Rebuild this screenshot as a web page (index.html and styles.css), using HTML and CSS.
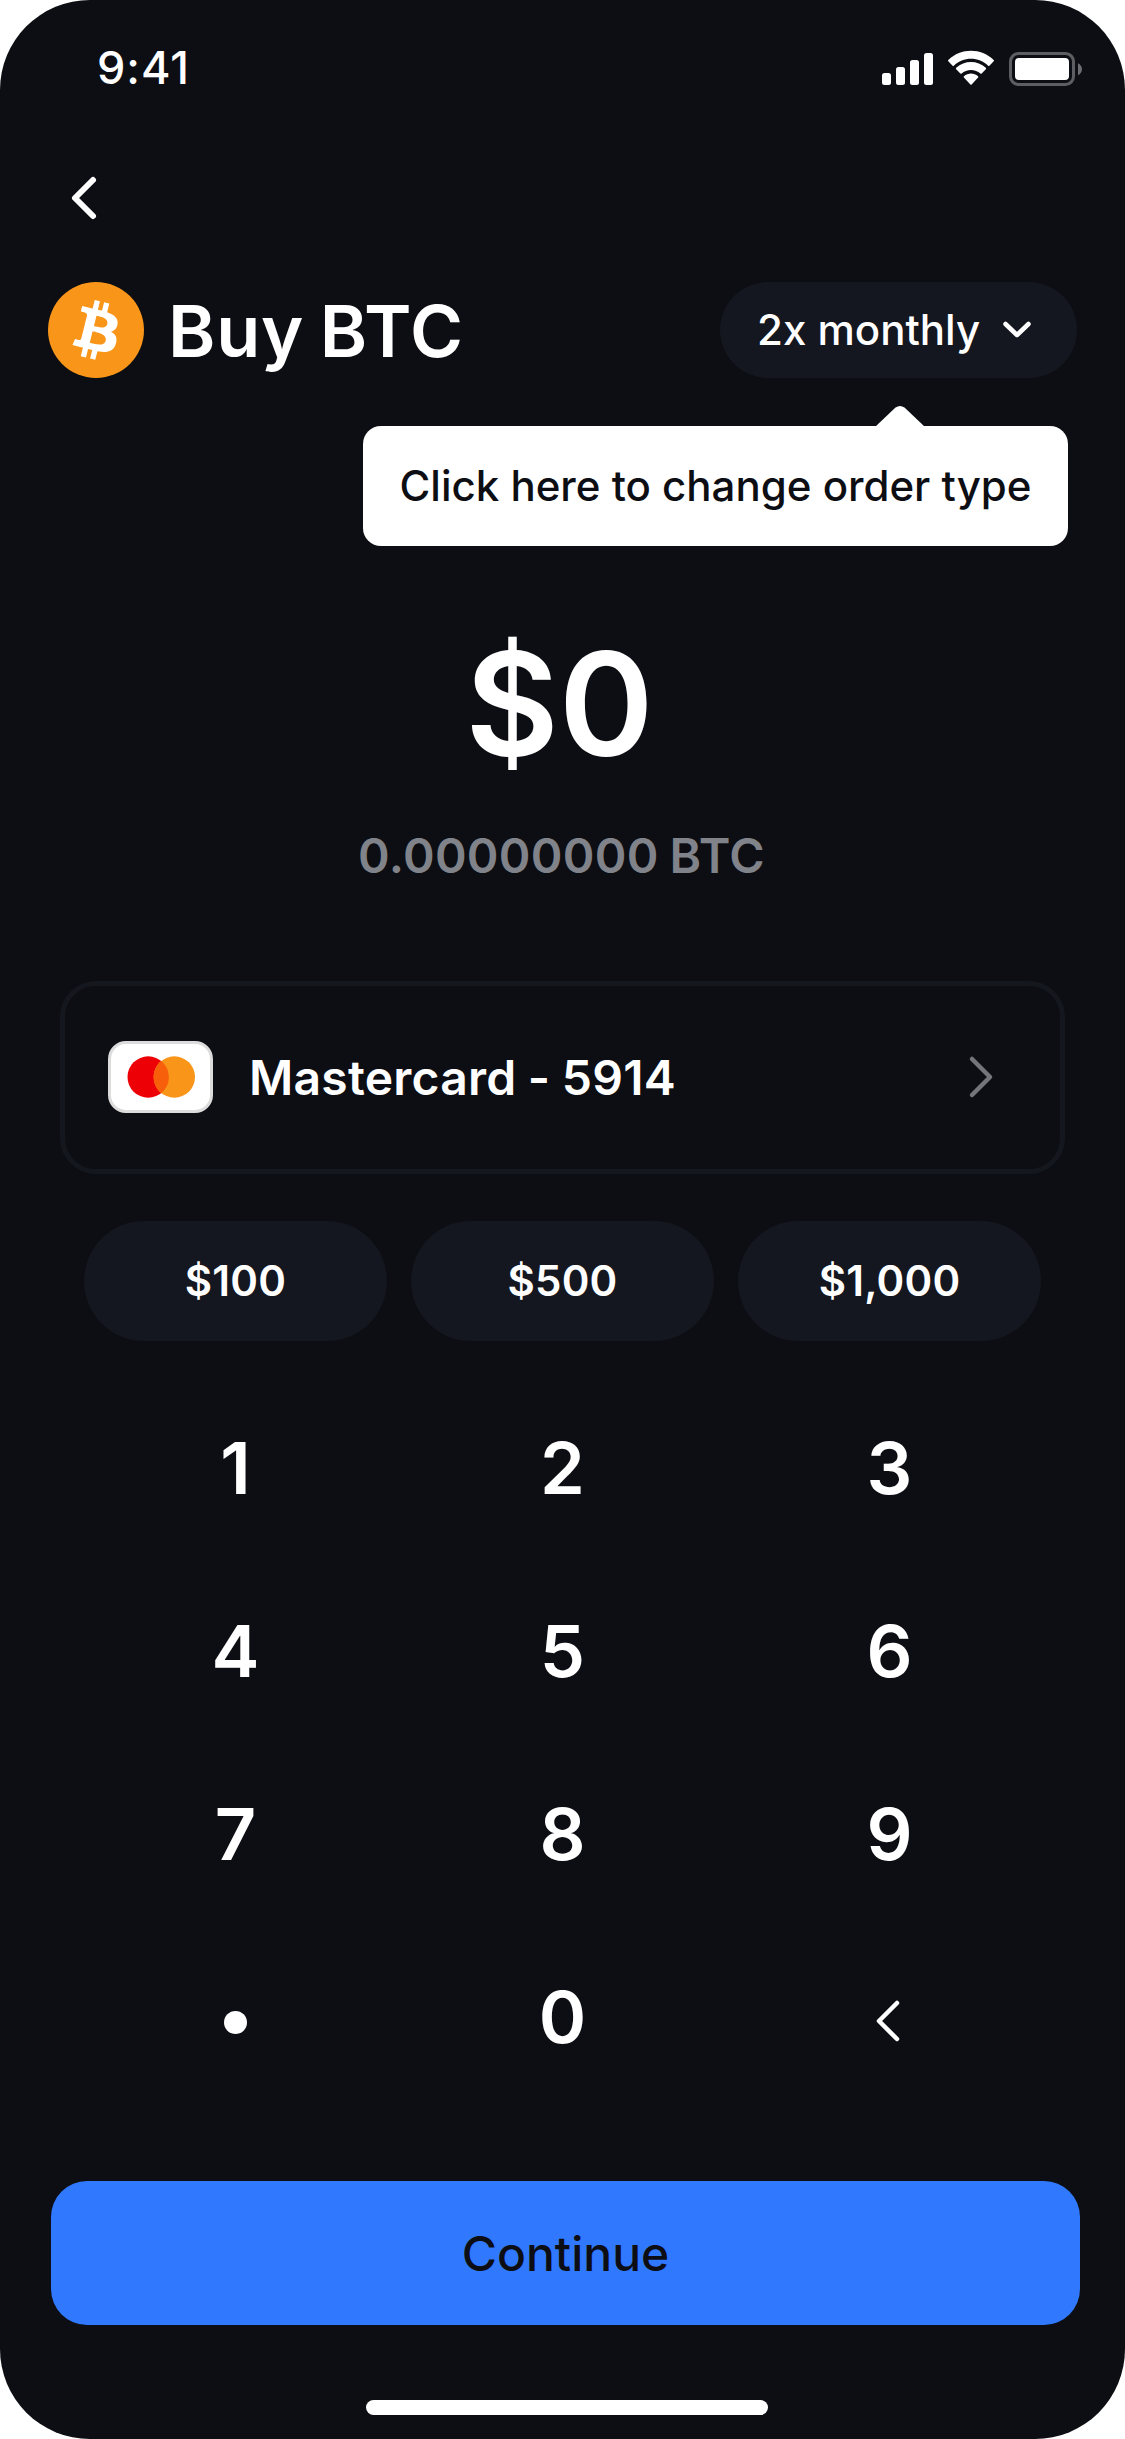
FILE: index.html
```html
<!DOCTYPE html>
<html lang="en">
<head>
<meta charset="utf-8">
<title>Buy BTC</title>
<link rel="stylesheet" href="styles.css">
</head>
<body>
<main class="screen">
  <header class="status">
    <span class="time">9:41</span>
    <svg class="status-icons" viewBox="0 0 204 40" width="204" height="40">
      <g fill="#fff">
        <rect x="2" y="25" width="9" height="12" rx="2.5"/>
        <rect x="16" y="19" width="9" height="18" rx="2.5"/>
        <rect x="30" y="12" width="9" height="25" rx="2.5"/>
        <rect x="44" y="5" width="9" height="32" rx="2.5"/>
        <path d="M91 10.8c6.400 0 12.500 2.450 17.150 6.850.35.33.9.330 1.250-.01l4.300-4.350c.4-.4.4-1-.02-1.370-12.700-12.150-32.650-12.150-45.360 0-.42.38-.42.98-.02 1.370l4.300 4.350c.35.34.9.340 1.250.010C78.500 13.250 84.600 10.800 91 10.800z"/>
        <path d="M91 21.900c3.500 0 6.800 1.300 9.400 3.600.35.330.9.320 1.240-.02l4.200-4.300c.37-.37.36-.97-.02-1.330-8.360-7.800-21.300-7.800-29.650 0-.38.36-.39.96-.02 1.330l4.220 4.300c.34.340.9.350 1.240.02 2.600-2.300 5.890-3.600 9.390-3.600z"/>
        <path d="M98.100 29.500c.38-.38.360-.99-.05-1.330-4.070-3.430-10.030-3.430-14.100 0-.41.340-.43.950-.05 1.330l6.480 6.900c.34.370.900.370 1.240 0z"/>
        <rect x="135" y="10" width="54" height="22" rx="4"/>
      </g>
      <rect x="130.500" y="5.500" width="63" height="31" rx="8" fill="none" stroke="#5d5e61" stroke-width="3"/>
      <path d="M198 15.200v12c2.400-1 4-3.400 4-6s-1.600-5-4-6z" fill="#6c6d70"/>
    </svg>
  </header>

  <nav class="nav">
    <svg viewBox="0 0 30 48" width="30" height="48"><path d="M24 6 6 24l18 18" fill="none" stroke="#fff" stroke-width="6" stroke-linecap="round" stroke-linejoin="round"/></svg>
  </nav>

  <section class="heading">
    <svg class="coin" viewBox="0 0 32 32" width="96" height="96">
      <circle cx="16" cy="16" r="16" fill="#f99619"/>
      <path fill="#fff" d="M23.189 14.020c.314-2.096-1.283-3.223-3.465-3.975l.708-2.840-1.728-.43-.69 2.765c-.454-.114-.92-.22-1.385-.326l.695-2.783L15.596 6l-.708 2.839c-.376-.086-.746-.17-1.104-.26l.002-.009-2.384-.595-.46 1.846s1.283.294 1.256.312c.7.175.826.638.805 1.006l-.806 3.235c.048.012.110.030.180.057l-.183-.045-1.130 4.532c-.086.212-.303.531-.793.410.018.025-1.256-.313-1.256-.313l-.858 1.978 2.250.561c.418.105.828.215 1.231.318l-.715 2.872 1.727.430.708-2.840c.472.127.930.245 1.378.357l-.706 2.828 1.728.430.715-2.866c2.948.558 5.164.333 6.097-2.333.752-2.146-.037-3.385-1.588-4.192 1.130-.260 1.980-1.003 2.207-2.538zm-3.950 5.538c-.533 2.147-4.148.986-5.320.695l.950-3.805c1.172.293 4.929.872 4.370 3.110zm.535-5.569c-.487 1.953-3.495.960-4.470.717l.860-3.450c.975.243 4.118.696 3.610 2.733z"/>
    </svg>
    <h1 class="title">Buy BTC</h1>
    <div class="frequency">
      <button class="pill"><span>2x monthly</span>
        <svg viewBox="0 0 34 22" width="34" height="22"><path d="M5.500 5 17 16 28.500 5" fill="none" stroke="#fff" stroke-width="4.500" stroke-linecap="round" stroke-linejoin="round"/></svg>
      </button>
      <div class="tooltip"><span>Click here to change order type</span>
        <svg class="arrow" viewBox="0 0 50 22" width="50" height="22"><path d="M0 22 20.500 2.500Q25-.5 29.500 2.500L50 22z" fill="#fff"/></svg>
      </div>
    </div>
  </section>

  <section class="amount">
    <div class="fiat">$0</div>
    <div class="crypto">0.00000000 BTC</div>
  </section>

  <section class="method">
    <svg class="card-logo" viewBox="0 0 105 72" width="105" height="72">
      <rect x="1.500" y="1.500" width="102" height="69" rx="16.500" fill="#fff" stroke="#dcdcdc" stroke-width="3"/>
      <circle cx="40.200" cy="36" r="20.700" fill="#ed0006"/>
      <circle cx="66.300" cy="36" r="20.700" fill="#f99619"/>
      <path d="M53.250 19.930a20.700 20.700 0 0 1 0 32.140 20.700 20.700 0 0 1 0-32.140z" fill="#f75f0b"/>
    </svg>
    <span class="method-name">Mastercard - 5914</span>
    <svg class="method-arrow" viewBox="0 0 30 48" width="30" height="48"><path d="M6 6 24 24 6 42" fill="none" stroke="#747579" stroke-width="4.500" stroke-linecap="round" stroke-linejoin="round"/></svg>
  </section>

  <section class="chips">
    <button class="chip">$100</button>
    <button class="chip">$500</button>
    <button class="chip">$1,000</button>
  </section>

  <section class="keypad">
    <button class="key">1</button><button class="key">2</button><button class="key">3</button>
    <button class="key">4</button><button class="key">5</button><button class="key">6</button>
    <button class="key">7</button><button class="key">8</button><button class="key">9</button>
    <button class="key"><i class="dot"></i></button><button class="key">0</button>
    <button class="key"><svg class="erase" viewBox="0 0 30 48" width="30" height="48"><path d="M24 6 6 24l18 18" fill="none" stroke="#fff" stroke-width="4.500" stroke-linecap="round" stroke-linejoin="round"/></svg></button>
  </section>

  <button class="continue">Continue</button>
  <div class="home"></div>
</main>
</body>
</html>
```

FILE: styles.css
```css
* { box-sizing: border-box; margin: 0; padding: 0; }
body { background: #fff; font-family: Inter, sans-serif; color: #fff; }
button { border: 0; background: none; color: inherit; font: inherit; }
svg { display: block; flex: none; }

.screen {
  width: 1125px;
  height: 2439px;
  background: #0d0e13;
  border-radius: 90px;
  overflow: hidden;
  display: flex;
  flex-direction: column;
}

.status {
  height: 132px;
  padding: 48px 41px 0 97px;
  display: flex;
  justify-content: space-between;
}
.time { font-size: 45px; line-height: 40px; font-weight: 500; letter-spacing: 1px; }

.nav { height: 132px; padding: 42px 0 0 69px; }

.heading {
  margin-top: 18px;
  height: 96px;
  padding: 0 48px;
  display: flex;
  align-items: center;
}
.title {
  margin-left: 24px;
  padding-top: 1px;
  font-size: 72px;
  line-height: 96px;
  font-weight: 600;
  letter-spacing: 0.7px;
  word-spacing: -3px;
}
.frequency { position: relative; margin-left: auto; }
.pill {
  width: 357px;
  height: 96px;
  padding: 0 43px 2px 37px;
  border-radius: 48px;
  background: #14171f;
  display: flex;
  align-items: center;
  justify-content: space-between;
  font-size: 42px;
  font-weight: 500;
}
.pill svg { margin-top: 2px; }
.tooltip {
  position: absolute;
  top: 144px;
  right: 9px;
  width: 705px;
  height: 120px;
  padding-bottom: 2px;
  border-radius: 18px;
  background: #fff;
  color: #0d0e13;
  display: flex;
  align-items: center;
  justify-content: center;
  font-size: 42px;
  font-weight: 500;
  white-space: nowrap;
}
.arrow { position: absolute; top: -21px; right: 143px; }

.amount { margin-top: 228px; text-align: center; }
.fiat { padding-right: 6px; font-size: 144px; line-height: 196px; font-weight: 600; }
.crypto {
  margin-top: 24px;
  padding-right: 2px;
  font-size: 48px;
  line-height: 60px;
  font-weight: 600;
  letter-spacing: 0.3px;
  word-spacing: -1.5px;
  color: #808389;
}

.method {
  margin: 95px 60px 0;
  height: 193px;
  border: 5px solid #14171d;
  border-radius: 36px;
  padding: 0 64px 1px 43px;
  display: flex;
  align-items: center;
}
.method-name { margin-left: 36px; font-size: 48px; font-weight: 600; letter-spacing: 0.25px; word-spacing: -1px; }
.method-arrow { margin-left: auto; }

.chips { margin: 47px 84px 0; display: grid; grid-template-columns: repeat(3, 303px); gap: 24px; }
.chip {
  height: 120px;
  padding-bottom: 1px;
  border-radius: 60px;
  background: #14171f;
  font-size: 42px;
  font-weight: 600;
  letter-spacing: 0.2px;
}

.keypad { margin: 35px 84px 0; display: grid; grid-template-columns: repeat(3, 303px); gap: 0 24px; }
.key {
  height: 183px;
  display: flex;
  align-items: center;
  justify-content: center;
  font-size: 72px;
  font-weight: 600;
}
.dot { width: 23px; height: 23px; border-radius: 50%; background: #fff; margin-top: 11px; }
.erase { margin: 8px 3px 0 0; }

.continue {
  margin: 73px 45px 0 51px;
  height: 144px;
  border-radius: 36px;
  background: #3079ff;
  color: #0d0e13;
  font-size: 48px;
  font-weight: 500;
}
.home { margin: 75px 0 0 366px; width: 402px; height: 15px; border-radius: 8px; background: #fff; }
```
